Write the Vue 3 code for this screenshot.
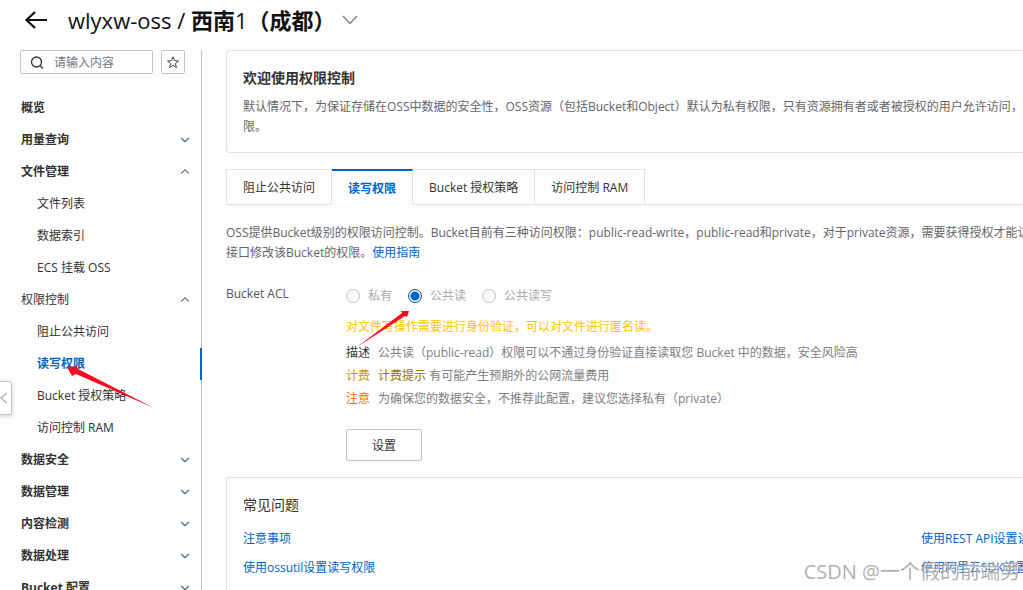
<script setup>
import { ref } from 'vue'

const menu = [
  { text: '概览', bold: true },
  { text: '用量查询', bold: true, arrow: 'down' },
  { text: '文件管理', bold: true, arrow: 'up' },
  { text: '文件列表', sub: true },
  { text: '数据索引', sub: true },
  { text: 'ECS 挂载 OSS', sub: true },
  { text: '权限控制', arrow: 'up' },
  { text: '阻止公共访问', sub: true },
  { text: '读写权限', sub: true, active: true },
  { text: 'Bucket 授权策略', sub: true },
  { text: '访问控制 RAM', sub: true },
  { text: '数据安全', bold: true, arrow: 'down' },
  { text: '数据管理', bold: true, arrow: 'down' },
  { text: '内容检测', bold: true, arrow: 'down' },
  { text: '数据处理', bold: true, arrow: 'down' },
  { text: 'Bucket 配置', bold: true, arrow: 'down' }
]
const tabs = ['阻止公共访问', '读写权限', 'Bucket 授权策略', '访问控制 RAM']
const activeTab = ref('读写权限')
const options = ['私有', '公共读', '公共读写']
const acl = ref('公共读')
</script>

<template>
  <div class="page">
    <header class="top">
      <button class="plain" aria-label="返回">
        <svg width="24" height="20" viewBox="0 0 24 20" fill="none" stroke="#111" stroke-width="2.200">
          <path d="M23 10H2.500M11 2L2.500 10L11 18" />
        </svg>
      </button>
      <h1><span>wlyxw-oss / </span>西南<span>1</span>（成都）</h1>
      <button class="plain switch" aria-label="切换 Bucket">
        <svg width="16" height="10" viewBox="0 0 16 10" fill="none" stroke="#808080" stroke-width="1.4">
          <path d="M1 1L8 8.500L15 1" />
        </svg>
      </button>
    </header>

    <div class="body">
      <aside>
        <div class="tools">
          <label class="search">
            <svg width="14" height="14" viewBox="0 0 14 14" fill="none" stroke="#333" stroke-width="1.3">
              <circle cx="6.500" cy="7" r="5" />
              <path d="M10 10.500L13 13.500" />
            </svg>
            <input type="text" placeholder="请输入内容" aria-label="请输入内容" />
          </label>
          <button class="star" aria-label="收藏">
            <svg width="14" height="14" viewBox="0 0 14 14" fill="none" stroke="#444" stroke-width="1" stroke-linejoin="round">
              <path d="M7 1.800L8.500 5.700L12.500 6L9.400 8.600L10.400 12.600L7 10.400L3.600 12.600L4.600 8.600L1.500 6L5.500 5.700Z" />
            </svg>
          </button>
        </div>
        <nav>
          <a v-for="m in menu" :key="m.text" href="#" :class="{ bold: m.bold, sub: m.sub, active: m.active }">
            <span>{{ m.text }}</span>
            <svg v-if="m.arrow" width="10" height="6" viewBox="0 0 10 6" fill="none" :stroke="m.arrow === 'down' ? '#3d6478' : '#777'" stroke-width="1.1">
              <path :d="m.arrow === 'down' ? 'M1.200 1L5 4.700L8.800 1' : 'M1.200 4.500L5 0.800L8.800 4.500'" />
            </svg>
          </a>
        </nav>
      </aside>

      <main>
        <section class="card welcome">
          <h2>欢迎使用权限控制</h2>
          <p>默认情况下，为保证存储在OSS中数据的安全性，OSS资源（包括Bucket和Object）默认为私有权限，只有资源拥有者或者被授权的用户允许访问，如<br />限。</p>
        </section>

        <div class="tabs" role="tablist">
          <button v-for="t in tabs" :key="t" role="tab" :aria-selected="t === activeTab" :class="{ on: t === activeTab }" @click="activeTab = t">{{ t }}</button>
        </div>

        <p class="intro">OSS提供Bucket级别的权限访问控制。Bucket目前有三种访问权限：public-read-write，public-read和private，对于private资源，需要获得授权才能访问<br />接口修改该Bucket的权限。<a href="#">使用指南</a></p>

        <div class="form">
          <div id="acl-label" class="label">Bucket ACL</div>
          <div class="field">
            <div class="radios" role="radiogroup" aria-labelledby="acl-label">
              <label v-for="o in options" :key="o"><input v-model="acl" type="radio" name="acl" :value="o" />{{ o }}</label>
            </div>
            <p class="warn">对文件写操作需要进行身份验证，可以对文件进行匿名读。</p>
            <dl>
              <dt>描述</dt>
              <dd>公共读（public-read）权限可以不通过身份验证直接读取您 Bucket 中的数据，安全风险高</dd>
              <dt class="fee">计费</dt>
              <dd><a class="tip" href="#">计费提示</a> 有可能产生预期外的公网流量费用</dd>
              <dt class="note">注意</dt>
              <dd>为确保您的数据安全，不推荐此配置，建议您选择私有（private）</dd>
            </dl>
            <button class="set">设置</button>
          </div>
        </div>

        <section class="card faq">
          <h3>常见问题</h3>
          <div class="links">
            <a href="#">注意事项</a>
            <a href="#">使用REST API设置读写权限</a>
            <a href="#">使用ossutil设置读写权限</a>
            <a href="#">使用阿里云SDK设置读写权限</a>
          </div>
        </section>
      </main>
    </div>

    <button class="drawer" aria-label="收起">
      <svg width="8" height="12" viewBox="0 0 8 12" fill="none" stroke="#b5b8bd" stroke-width="1.6">
        <path d="M7 1L1 6L7 11" />
      </svg>
    </button>
    <svg class="mark mark-menu" width="92" height="46" viewBox="0 0 92 46" fill="#fb0a20">
      <path d="M3 3L13 2L14 5L90 44L12 10L8 12Z" />
    </svg>
    <svg class="mark mark-radio" width="56" height="40" viewBox="0 0 56 40" fill="#fb0a20">
      <path d="M54 2L52 8L50 7L2 38L47 4L46 2Z" />
    </svg>
    <div class="watermark">CSDN @一个假的前端男</div>
  </div>
</template>

<style>
body {
  margin: 0;
}
</style>

<style scoped>
* {
  box-sizing: border-box;
}
.page {
  position: relative;
  height: 100vh;
  overflow: hidden;
  display: flex;
  flex-direction: column;
  background: #fdfdfd;
  color: #333;
  font: 12px/20px "Open Sans", "Noto Sans CJK SC", sans-serif;
}
h1, h2, h3, p, dl, dd {
  margin: 0;
}
button, input {
  font: inherit;
  color: inherit;
}
a {
  color: #0064c8;
  text-decoration: none;
}
.plain {
  display: flex;
  padding: 0;
  border: 0;
  background: none;
}
.top {
  flex: none;
  display: flex;
  align-items: center;
  height: 40px;
  margin-bottom: 10px;
  padding-left: 24px;
}
h1 {
  margin-left: 20px;
  color: #111;
  font-size: 22px;
  line-height: 30px;
  font-weight: 700;
  white-space: nowrap;
}
h1 span {
  font-weight: 500;
}
.switch {
  margin-left: 6px;
}
.body {
  flex: 1;
  min-height: 0;
  display: flex;
}
aside {
  flex: none;
  width: 202px;
  border-right: 1px solid #c0c3cb;
}
.tools {
  display: flex;
  gap: 8px;
  padding: 0 16px 18px 20px;
}
.search {
  flex: 1;
  min-width: 0;
  display: flex;
  align-items: center;
  gap: 10px;
  height: 24px;
  padding: 0 9px;
  border: 1px solid #c0c6cc;
  border-radius: 2px;
}
.search svg {
  flex: none;
}
.search input {
  flex: 1;
  min-width: 0;
  padding: 2px 0 0;
  border: 0;
  outline: 0;
  background: none;
}
.search input::placeholder {
  color: #777;
}
.star {
  display: flex;
  align-items: center;
  justify-content: center;
  width: 24px;
  height: 24px;
  padding: 0;
  border: 1px solid #c0c6cc;
  border-radius: 2px;
  background: none;
}
nav a {
  display: flex;
  align-items: center;
  justify-content: space-between;
  height: 32px;
  padding: 0 11px 0 21px;
  color: #333;
}
nav .bold {
  font-weight: 700;
}
nav .sub {
  padding-left: 37px;
}
nav .active {
  color: #0064c8;
  font-weight: 700;
  border-right: 2px solid #0064c8;
  margin-right: -1px;
}
main {
  flex: 1;
  min-width: 0;
  padding-left: 24px;
  white-space: nowrap;
}
.card {
  border: 1px solid #e2e2e2;
  border-right: 0;
  border-radius: 4px 0 0 4px;
  padding: 17px 0 15px 16px;
  overflow: hidden;
}
h2 {
  font-size: 14px;
  margin-bottom: 9px;
}
.welcome p, .intro {
  color: #666;
}
.tabs {
  display: flex;
  margin-top: 16px;
  border-bottom: 1px solid #e2e2e2;
}
.tabs button {
  height: 36px;
  margin-bottom: -1px;
  padding: 2px 16px 0;
  border: 1px solid #e2e2e2;
  border-left: 0;
  background: none;
}
.tabs button:first-child {
  border-left: 1px solid #e2e2e2;
}
.tabs .on {
  border-top: 2px solid #0064c8;
  border-bottom-color: #fdfdfd;
  background: #fdfdfd;
  color: #0064c8;
  font-weight: 700;
}
.intro {
  margin-top: 18px;
}
.form {
  display: flex;
  margin-top: 21px;
}
.label {
  flex: none;
  width: 120px;
  color: #555;
  font-weight: 500;
}
.field {
  padding-top: 2px;
}
.radios {
  display: flex;
  gap: 16px;
  color: #aaa;
}
.radios label {
  display: flex;
  align-items: center;
  gap: 8px;
}
.radios input {
  appearance: none;
  width: 14px;
  height: 14px;
  margin: 0;
  border: 1px solid #c6c9ce;
  border-radius: 50%;
  background: #f7f8fa;
}
.radios input:checked {
  border-color: #0b4a8c;
  background: radial-gradient(circle, #0064c8 4px, #fff 5px);
}
.warn {
  margin: 11px 0 4px;
  color: #ffc400;
}
dl {
  display: grid;
  grid-template-columns: 24px auto;
  column-gap: 8px;
  line-height: 23px;
}
dd {
  color: #808080;
}
.fee {
  color: #c99b00;
}
.note {
  color: #ff6a00;
}
.tip {
  color: #957800;
}
.set {
  width: 76px;
  height: 32px;
  margin-top: 19px;
  padding: 2px 0 0;
  border: 1px solid #c0c6cc;
  border-radius: 2px;
  background: #fdfdfd;
}
.faq {
  margin-top: 16px;
}
h3 {
  font-size: 14px;
  font-weight: 400;
  margin-bottom: 14px;
}
.links {
  display: grid;
  grid-template-columns: 678px auto;
  row-gap: 9px;
}
.drawer {
  position: absolute;
  left: -1px;
  top: 381px;
  display: flex;
  align-items: center;
  width: 13px;
  height: 34px;
  padding: 0;
  border: 1px solid #c4c7cc;
  border-radius: 0 2px 2px 0;
  background: #fff;
  box-shadow: 0 1px 4px rgba(0, 0, 0, 0.2);
}
.mark {
  position: absolute;
  pointer-events: none;
}
.mark-menu {
  left: 64px;
  top: 364px;
}
.mark-radio {
  left: 355px;
  top: 309px;
}
.watermark {
  position: absolute;
  right: 3px;
  bottom: 6px;
  color: rgba(150, 150, 150, 0.75);
  font-size: 20px;
  line-height: 24px;
  text-shadow: 1px 1px 1px rgba(255, 255, 255, 0.8);
  pointer-events: none;
}
</style>
